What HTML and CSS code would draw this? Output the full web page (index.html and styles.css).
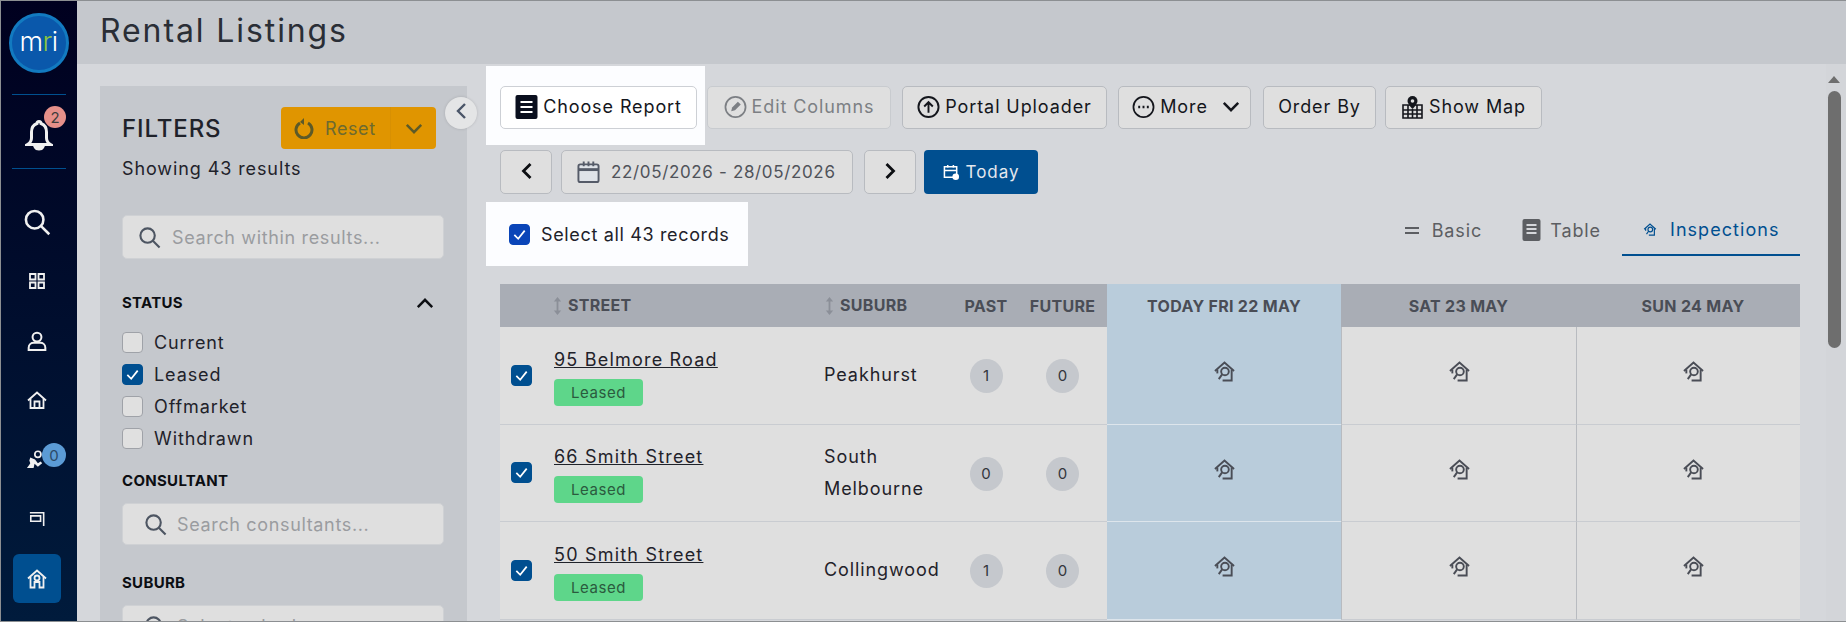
FILE: index.html
```html
<!DOCTYPE html>
<html lang="en">
<head>
    <meta charset="UTF-8">
    <title>Rental Listings</title>
    <link rel="stylesheet" href="styles.css">
</head>
<body>
    <svg class="defs" xmlns="http://www.w3.org/2000/svg">
        <symbol id="i-search" viewBox="0 0 24 24"><circle cx="10" cy="10" r="7.5"/><path d="M15.5 15.5 22.5 22.5"/></symbol>
        <symbol id="i-inspect" viewBox="0 0 24 22"><path d="M2 10.5 12 1.500l10 9"/><path d="M19.500 9v11.500H10"/><path d="M4.500 9v4"/><circle cx="12.500" cy="11" r="4"/><path d="M9.500 14 6 19"/></symbol>
        <symbol id="i-down" viewBox="0 0 20 12"><path d="M2 2l8 8 8-8"/></symbol>
        <symbol id="i-check" viewBox="0 0 22 22"><path d="M5 11.500l4.500 4.500L17 6.500"/></symbol>
    </svg>
    <div class="app">
        <nav class="sidebar">
            <div class="logo"><span>m</span><span class="logo-r">r</span><span>i</span></div>
            <div class="side-line"></div>
            <div class="bell">
                <svg class="bell-icon" viewBox="0 0 28 32"><path d="M14 2.500c-1.400 0-2 1-2 2C8 6 6.500 9 6.500 13v6c0 3-1.500 5-4 6.500h23c-2.500-1.500-4-3.500-4-6.500v-6c0-4-1.500-7-5.500-8.500 0-1-.600-2-2-2z"/><path d="M10.500 28.500c1 2 6 2 7 0z"/></svg>
                <span class="badge badge-red">2</span>
            </div>
            <div class="side-line"></div>
            <div class="side-nav">
                <a class="side-item"><svg class="side-icon big" viewBox="0 0 24 24"><use href="#i-search"/></svg></a>
                <a class="side-item"><svg class="side-icon" viewBox="0 0 16 16"><path d="M1 1h5.500v5.500H1zM9.500 1H15v5.500H9.500zM1 9.500h5.500V15H1zM9.500 9.500H15V15H9.500z"/></svg></a>
                <a class="side-item"><svg class="side-icon wide" viewBox="0 0 18 18"><circle cx="9" cy="5.500" r="4"/><path d="M1.500 17v-2c0-3 2.500-4.500 4.500-4.500h6c2 0 4.500 1.500 4.500 4.500v2z"/></svg></a>
                <a class="side-item"><svg class="side-icon wide" viewBox="0 0 20 18"><path d="M1 9.500 10 1.500l9 8"/><path d="M3.500 8v9h13V8"/><path d="M7.500 17v-6.500h5V17"/></svg></a>
                <a class="side-item">
                    <svg class="side-icon worker" viewBox="0 0 20 20"><circle cx="12.500" cy="4.500" r="3.200"/><path class="solid" d="M4.500 8l5 2 3 4 3-2 1.500 2-4.500 3.500-3.500-3-1 4.500H1l2.500-3.500 1-1.500-1-3z"/></svg>
                    <span class="badge badge-blue">0</span>
                </a>
                <a class="side-item"><svg class="side-icon" viewBox="0 0 18 18"><path d="M1 2h15.500v15"/><path d="M2 5.500h11v6H2z"/></svg></a>
                <a class="side-item is-active"><svg class="side-icon wide" viewBox="0 0 20 20"><path d="M1 9.500 10 1.500l9 8"/><path d="M3.500 8v10.500h4V13h5v5.500h4V8"/><circle cx="10" cy="9" r="2.500"/></svg></a>
            </div>
        </nav>

        <div class="page">
            <header class="topbar">Rental Listings</header>
            <div class="content">
                <aside class="filters">
                    <button class="collapse"><svg viewBox="0 0 12 18"><path d="M10 2 3 9l7 7"/></svg></button>
                    <div class="filters-head">
                        <h2>FILTERS</h2>
                        <div class="reset">
                            <div class="reset-main">
                                <svg class="reset-icon" viewBox="0 0 20 22"><path d="M6 6a8 8 0 1 0 8 0"/><path class="solid" d="M10 1v7L6 5z"/></svg>
                                <span>Reset</span>
                            </div>
                            <div class="reset-more"><svg viewBox="0 0 20 12"><use href="#i-down"/></svg></div>
                        </div>
                    </div>
                    <p class="showing">Showing 43 results</p>
                    <div class="search search-first">
                        <svg viewBox="0 0 24 24"><use href="#i-search"/></svg>
                        <span>Search within results...</span>
                    </div>
                    <div class="filter-title status-title">
                        STATUS
                        <svg viewBox="0 0 20 12"><path d="M2 10l8-8 8 8"/></svg>
                    </div>
                    <ul class="status-list">
                        <li><span class="box"></span>Current</li>
                        <li><span class="box is-on"><svg viewBox="0 0 22 22"><use href="#i-check"/></svg></span>Leased</li>
                        <li><span class="box"></span>Offmarket</li>
                        <li><span class="box"></span>Withdrawn</li>
                    </ul>
                    <div class="filter-title consultant-title">CONSULTANT</div>
                    <div class="search search-in">
                        <svg viewBox="0 0 24 24"><use href="#i-search"/></svg>
                        <span>Search consultants...</span>
                    </div>
                    <div class="filter-title suburb-title">SUBURB</div>
                    <div class="search search-in search-suburb">
                        <svg viewBox="0 0 24 24"><use href="#i-search"/></svg>
                        <span>Select suburb</span>
                    </div>
                </aside>

                <main class="main">
                    <div class="tool-row">
                        <div class="spot spot-report">
                            <button class="btn btn-white btn-report">
                                <svg class="btn-icon" viewBox="0 0 22 24"><rect width="22" height="24" rx="2" fill="#0a0f1e"/><path d="M5 7h12M5 12h12M5 17h12" stroke="#fff" stroke-width="2.200"/></svg>
                                Choose Report
                            </button>
                        </div>
                        <button class="btn btn-off btn-edit">
                            <svg class="btn-icon" viewBox="0 0 24 24"><circle cx="12" cy="12" r="10.500" fill="none" stroke="currentColor" stroke-width="1.800"/><path d="M7.500 16.500l1-4 6-6 3 3-6 6z" fill="currentColor"/></svg>
                            Edit Columns
                        </button>
                        <button class="btn btn-portal">
                            <svg class="btn-icon" viewBox="0 0 24 24"><circle cx="12" cy="12" r="10.500" fill="none" stroke="currentColor" stroke-width="2"/><path d="M12 18V7M7.500 11.500 12 7l4.500 4.500" fill="none" stroke="currentColor" stroke-width="2"/></svg>
                            Portal Uploader
                        </button>
                        <button class="btn btn-more">
                            <svg class="btn-icon" viewBox="0 0 24 24"><circle cx="12" cy="12" r="10.500" fill="none" stroke="currentColor" stroke-width="1.800"/><path d="M6.500 12h2M11 12h2M15.500 12h2" stroke="currentColor" stroke-width="2.400"/></svg>
                            More
                            <svg class="btn-caret" viewBox="0 0 20 12"><use href="#i-down"/></svg>
                        </button>
                        <button class="btn btn-order">Order By</button>
                        <button class="btn btn-map">
                            <svg class="btn-icon" viewBox="0 0 22 24"><path d="M1.500 10h19v13h-19zM1.500 15h19M1.500 19h19M6.500 10v13M11 14v9M15.500 10v13" fill="none" stroke="currentColor" stroke-width="1.600"/><path d="M11 1a5 5 0 0 0-5 5c0 3 5 8 5 8s5-5 5-8a5 5 0 0 0-5-5z" fill="currentColor"/><circle cx="11" cy="6" r="1.800" fill="#dfdfdf"/></svg>
                            Show Map
                        </button>
                    </div>

                    <div class="date-row">
                        <button class="btn btn-step"><svg viewBox="0 0 12 18"><path d="M10 2 3 9l7 7"/></svg></button>
                        <div class="date-range">
                            <svg viewBox="0 0 24 24"><rect x="1.500" y="4" width="21" height="18.500" rx="2" fill="#dfe3e8" stroke="#555b68" stroke-width="2"/><path d="M1.500 9.500h21" stroke="#555b68" stroke-width="3"/><path d="M7 1v5M12 1v5M17 1v5" stroke="#555b68" stroke-width="2"/></svg>
                            22/05/2026 - 28/05/2026
                        </div>
                        <button class="btn btn-step btn-next"><svg viewBox="0 0 12 18"><path d="M2 2l7 7-7 7"/></svg></button>
                        <button class="btn-today">
                            <svg viewBox="0 0 18 18"><path d="M1.500 3h13v11h-13zM1.500 7h13M5 1v3M11 1v3" fill="none" stroke="#fff" stroke-width="1.600"/><circle cx="13.500" cy="13.500" r="3.500" fill="#fff"/></svg>
                            Today
                        </button>
                    </div>

                    <div class="view-row">
                        <label class="spot spot-select">
                            <span class="box box-bright"><svg viewBox="0 0 22 22"><use href="#i-check"/></svg></span>
                            Select all 43 records
                        </label>
                        <div class="tabs">
                            <a class="tab tab-basic"><span class="tab-eq"></span>Basic</a>
                            <a class="tab tab-table">
                                <svg viewBox="0 0 18 22"><rect width="18" height="22" rx="2" fill="#5c5e62"/><path d="M4 6h10M4 10h10M4 14h10" stroke="#d5d7db" stroke-width="1.800"/></svg>
                                Table
                            </a>
                            <a class="tab tab-inspect is-current">
                                <svg class="inspect" viewBox="0 0 24 22"><use href="#i-inspect"/></svg>
                                Inspections
                            </a>
                        </div>
                    </div>

                    <table class="grid">
                        <colgroup>
                            <col class="c-check"><col class="c-street"><col class="c-suburb"><col class="c-past"><col class="c-future"><col class="c-today"><col class="c-sat"><col class="c-sun">
                        </colgroup>
                        <thead>
                            <tr>
                                <th></th>
                                <th class="th-left"><svg class="sort" viewBox="0 0 10 22"><path d="M5 1 1 6h3v10H1l4 5 4-5H6V6h3z"/></svg>STREET</th>
                                <th class="th-left"><svg class="sort" viewBox="0 0 10 22"><path d="M5 1 1 6h3v10H1l4 5 4-5H6V6h3z"/></svg>SUBURB</th>
                                <th>PAST</th>
                                <th>FUTURE</th>
                                <th class="is-today">TODAY FRI 22 MAY</th>
                                <th>SAT 23 MAY</th>
                                <th class="last">SUN 24 MAY</th>
                            </tr>
                        </thead>
                        <tbody>
                            <tr>
                                <td><span class="box is-on"><svg viewBox="0 0 22 22"><use href="#i-check"/></svg></span></td>
                                <td class="listing"><a class="street">95 Belmore Road</a><span class="tag">Leased</span></td>
                                <td class="suburb">Peakhurst</td>
                                <td><span class="count">1</span></td>
                                <td><span class="count">0</span></td>
                                <td class="is-today"><svg class="inspect" viewBox="0 0 24 22"><use href="#i-inspect"/></svg></td>
                                <td class="day"><svg class="inspect" viewBox="0 0 24 22"><use href="#i-inspect"/></svg></td>
                                <td class="day last"><svg class="inspect" viewBox="0 0 24 22"><use href="#i-inspect"/></svg></td>
                            </tr>
                            <tr>
                                <td><span class="box is-on"><svg viewBox="0 0 22 22"><use href="#i-check"/></svg></span></td>
                                <td class="listing"><a class="street">66 Smith Street</a><span class="tag">Leased</span></td>
                                <td class="suburb">South Melbourne</td>
                                <td><span class="count">0</span></td>
                                <td><span class="count">0</span></td>
                                <td class="is-today"><svg class="inspect" viewBox="0 0 24 22"><use href="#i-inspect"/></svg></td>
                                <td class="day"><svg class="inspect" viewBox="0 0 24 22"><use href="#i-inspect"/></svg></td>
                                <td class="day last"><svg class="inspect" viewBox="0 0 24 22"><use href="#i-inspect"/></svg></td>
                            </tr>
                            <tr>
                                <td><span class="box is-on"><svg viewBox="0 0 22 22"><use href="#i-check"/></svg></span></td>
                                <td class="listing"><a class="street">50 Smith Street</a><span class="tag">Leased</span></td>
                                <td class="suburb">Collingwood</td>
                                <td><span class="count">1</span></td>
                                <td><span class="count">0</span></td>
                                <td class="is-today"><svg class="inspect" viewBox="0 0 24 22"><use href="#i-inspect"/></svg></td>
                                <td class="day"><svg class="inspect" viewBox="0 0 24 22"><use href="#i-inspect"/></svg></td>
                                <td class="day last"><svg class="inspect" viewBox="0 0 24 22"><use href="#i-inspect"/></svg></td>
                            </tr>
                        </tbody>
                    </table>
                </main>

                <div class="scrollbar">
                    <span class="scroll-up"></span>
                    <span class="scroll-thumb"></span>
                </div>
            </div>
        </div>
    </div>
</body>
</html>
```

FILE: styles.css
```css
* {
    box-sizing: border-box;
}

body {
    margin: 0;
    font-family: Inter, "DejaVu Sans", sans-serif;
    font-size: 18px;
    letter-spacing: 0.9px;
    color: #1f222a;
    overflow: hidden;
}

button {
    font: inherit;
    letter-spacing: inherit;
}

.defs {
    display: none;
}

.app {
    display: flex;
    width: 1846px;
    height: 622px;
    border: 1px solid #8c8f92;
    border-right: 0;
    overflow: hidden;
    background-color: #d5d7db;
}

/* left navigation */
.sidebar {
    flex: 0 0 76px;
    display: flex;
    flex-direction: column;
    align-items: center;
    padding-top: 12px;
    background: linear-gradient(#00001f, #001b3c);
}

.logo {
    display: flex;
    justify-content: center;
    align-items: center;
    width: 60px;
    height: 60px;
    margin: 0 1px 21px 0;
    padding-bottom: 4px;
    border: 3px solid #127ac0;
    border-radius: 50%;
    background-color: #0a58ab;
    color: #fff;
    font-size: 27px;
    font-weight: 300;
    letter-spacing: -0.5px;
}

.logo-r {
    color: #8cc63f;
}

.side-line {
    width: 54px;
    height: 1px;
    margin-right: 1px;
    background-color: #00508f;
}

.bell {
    position: relative;
    height: 73px;
    width: 54px;
    display: flex;
    justify-content: center;
    align-items: center;
}

.bell-icon {
    width: 28px;
    height: 32px;
    margin-top: 7px;
    fill: none;
    stroke: #f0f0f0;
    stroke-width: 3;
}

.badge {
    position: absolute;
    display: flex;
    justify-content: center;
    align-items: center;
    border-radius: 50%;
    color: #3d3d3d;
    letter-spacing: 0;
}

.badge-red {
    top: 11px;
    left: 32px;
    width: 22px;
    height: 22px;
    background-color: #e5908a;
    font-size: 15px;
}

.badge-blue {
    top: 13px;
    left: 29px;
    width: 24px;
    height: 24px;
    background-color: #5b9bd5;
    color: #2c4a68;
    font-size: 15px;
}

.side-nav {
    margin-top: 23px;
    width: 76px;
}

.side-item {
    position: relative;
    display: flex;
    justify-content: center;
    align-items: center;
    width: 48px;
    height: 59.5px;
    margin-left: 12px;
}

.side-item.is-active {
    height: 49px;
    margin-top: 5px;
    border-radius: 6px;
    background-color: #004f90;
}

.side-icon {
    width: 16px;
    height: 16px;
    fill: none;
    stroke: #f0f0f0;
    stroke-width: 1.8;
}

.side-icon.wide {
    width: 20px;
    height: 20px;
}

.side-icon.worker {
    width: 19px;
    height: 19px;
    margin-right: 3px;
}

.side-icon.big {
    width: 28px;
    height: 28px;
    stroke-width: 2.2;
}

.side-icon .solid {
    fill: #f0f0f0;
    stroke: none;
}

/* page */
.page {
    flex: 1;
    min-width: 0;
    display: flex;
    flex-direction: column;
}

.topbar {
    height: 63px;
    padding: 11px 0 0 23px;
    background-color: #c5c8cd;
    color: #2a2e36;
    font-size: 32px;
    line-height: 38px;
    letter-spacing: 1.9px;
}

.content {
    flex: 1;
    display: flex;
    min-height: 0;
}

/* filters */
.filters {
    position: relative;
    flex: 0 0 367px;
    margin: 22px 0 0 23px;
    padding: 21px 23px 0 22px;
    background-color: #c5c8cd;
}

.collapse {
    position: absolute;
    top: 11px;
    left: 345px;
    width: 32px;
    height: 32px;
    padding: 0;
    border: 0;
    border-radius: 50%;
    background-color: #e4e5e6;
    box-shadow: 0 0 3px rgba(0, 0, 0, 0.15);
}

.collapse svg {
    width: 12px;
    height: 18px;
    fill: none;
    stroke: #4a5568;
    stroke-width: 2.4;
}

.filters-head {
    display: flex;
    justify-content: space-between;
    align-items: center;
    padding-right: 8px;
}

.filters-head h2 {
    margin: 0;
    font-size: 24px;
    font-weight: 500;
    letter-spacing: 0.9px;
}

.reset {
    display: flex;
    width: 155px;
    height: 42px;
    border-radius: 4px;
    background-color: #e09500;
    color: #6d6a30;
    font-size: 18px;
    letter-spacing: 0.6px;
}

.reset-main {
    flex: 1;
    display: flex;
    align-items: center;
    gap: 11px;
    padding-left: 13px;
    border-right: 1px solid #d89002;
}

.reset-icon {
    width: 20px;
    height: 22px;
    fill: none;
    stroke: #5c5a28;
    stroke-width: 3;
}

.reset-icon .solid {
    fill: #5c5a28;
    stroke: none;
}

.reset-more {
    flex: 0 0 45px;
    display: flex;
    justify-content: center;
    align-items: center;
}

.reset-more svg {
    width: 18px;
    height: 11px;
    fill: none;
    stroke: #5c5a28;
    stroke-width: 2.8;
}

.showing {
    margin: 8px 0 0;
    line-height: 24px;
}

.search {
    display: flex;
    align-items: center;
    height: 44px;
    border: 1px solid #cfd1d4;
    border-radius: 5px;
    background-color: #dfdfdf;
    color: #9a9c9f;
    font-size: 18px;
    letter-spacing: 0.65px;
}

.search svg {
    width: 23px;
    height: 23px;
    fill: none;
    stroke: #4d5562;
    stroke-width: 2.2;
}

.search-first {
    margin-top: 34px;
    padding-left: 15px;
    gap: 11px;
}

.search-in {
    padding-left: 21px;
    gap: 10px;
    height: 42px;
}

.search-suburb {
    margin-top: 12px;
}

.filter-title {
    display: flex;
    justify-content: space-between;
    align-items: center;
    font-size: 15px;
    font-weight: 700;
    line-height: 20px;
    letter-spacing: 0.3px;
    color: #0c0e12;
}

.filter-title svg {
    width: 18px;
    height: 11px;
    margin-right: 10px;
    fill: none;
    stroke: #0c0e12;
    stroke-width: 2.8;
}

.status-title {
    margin-top: 34px;
}

.status-list {
    margin: 13px 0 0;
    padding: 0;
    list-style: none;
}

.status-list li {
    display: flex;
    align-items: center;
    gap: 11px;
    height: 32px;
}

.box {
    flex: none;
    display: flex;
    width: 21px;
    height: 21px;
    border: 1px solid #9fa2a8;
    border-radius: 4px;
    background-color: #e0e0e0;
}

.box svg {
    width: 100%;
    height: 100%;
    fill: none;
    stroke: #fff;
    stroke-width: 2;
}

.box.is-on {
    border-color: #004f90;
    background-color: #004f90;
}

.box-bright {
    border-color: #0a45b8;
    background-color: #0a45b8;
}

.consultant-title {
    margin-top: 17px;
}

.consultant-title + .search {
    margin-top: 12px;
}

.suburb-title {
    margin-top: 28px;
}

/* main column */
.main {
    flex: 1;
    min-width: 0;
    margin-left: 19px;
    padding-top: 2px;
}

.tool-row {
    display: flex;
    align-items: flex-start;
}

.spot {
    background-color: #fcfdff;
}

.spot-report {
    width: 219px;
    padding: 20px 8px 16px 14px;
}

.btn {
    display: flex;
    align-items: center;
    justify-content: center;
    gap: 5px;
    height: 43px;
    padding: 0 0 2px;
    border: 1px solid #b8bbc0;
    border-radius: 5px;
    background-color: #dfdfdf;
    color: #14161c;
}

.btn-white {
    border-color: #cdd0d5;
    background-color: #fff;
}

.btn-icon {
    flex: none;
    width: 23px;
    height: 24px;
}

.btn-report {
    width: 197px;
}

.btn-off {
    color: #7c7f84;
    border-color: #c8cbcf;
}

.tool-row .btn {
    margin-top: 20px;
}

.spot-report .btn {
    margin-top: 0;
}

.btn-edit {
    width: 184px;
    margin-left: 2px;
}

.btn-portal {
    width: 205px;
    margin-left: 11px;
}

.btn-more {
    width: 133px;
    margin-left: 11px;
    padding-left: 3px;
}

.btn-caret {
    width: 18px;
    height: 11px;
    margin-left: 9px;
    fill: none;
    stroke: #14161c;
    stroke-width: 2.8;
}

.btn-order {
    width: 113px;
    margin-left: 12px;
}

.btn-map {
    width: 157px;
    margin-left: 9px;
}

.date-row {
    display: flex;
    height: 44px;
    margin: 5px 0 0 14px;
}

.date-row .btn,
.btn-today,
.date-range {
    height: 44px;
}

.btn-step {
    width: 52px;
}

.btn-step svg {
    width: 13px;
    height: 18px;
    fill: none;
    stroke: #0c0e12;
    stroke-width: 2.8;
}

.date-range {
    display: flex;
    align-items: center;
    gap: 11px;
    width: 292px;
    margin-left: 9px;
    padding-left: 15px;
    border: 1px solid #b8bbc0;
    border-radius: 5px;
    background-color: #dfdfdf;
    color: #50535a;
    font-size: 17px;
    letter-spacing: 0.65px;
}

.date-range svg {
    width: 23px;
    height: 24px;
    fill: none;
}

.btn-next {
    margin-left: 11px;
}

.btn-today {
    display: flex;
    justify-content: center;
    align-items: center;
    gap: 6px;
    width: 114px;
    margin-left: 8px;
    padding: 0;
    border: 0;
    border-radius: 4px;
    background-color: #004f90;
    color: #e4e8ee;
    font-size: 17px;
    letter-spacing: 0.95px;
}

.btn-today svg {
    width: 17px;
    height: 17px;
}

.view-row {
    display: flex;
    justify-content: space-between;
    align-items: flex-end;
    height: 64px;
    margin: 8px 26px 0 0;
}

.spot-select {
    display: flex;
    align-items: center;
    gap: 11px;
    width: 262px;
    height: 64px;
    padding-left: 23px;
    letter-spacing: 0.65px;
}

.tabs {
    display: flex;
    align-items: flex-end;
    margin-bottom: 10px;
    color: #5c5e62;
}

.tab {
    display: flex;
    align-items: center;
    height: 50px;
    padding-bottom: 2px;
}

.tab-eq {
    width: 14px;
    height: 7px;
    margin-right: 13px;
    border-top: 2px solid #5c5e62;
    border-bottom: 2px solid #5c5e62;
}

.tab-table {
    gap: 9px;
    margin-left: 40px;
}

.tab-table svg {
    width: 19px;
    height: 22px;
}

.tab-inspect {
    gap: 13px;
    width: 178px;
    margin-left: 21px;
    padding-left: 21px;
    letter-spacing: 1.05px;
}

.tab-inspect .inspect {
    flex: none;
    width: 14px;
    height: 13px;
    stroke: #004f90;
}

.is-current {
    border-bottom: 2px solid #004f90;
    color: #004f90;
}

/* table */
.grid {
    width: 1300px;
    margin: 18px 0 0 14px;
    border-spacing: 0;
    table-layout: fixed;
}

.c-check { width: 50px; }
.c-street { width: 272px; }
.c-suburb { width: 132px; }
.c-past { width: 64px; }
.c-future { width: 89px; }
.c-today { width: 234px; }
.c-sat { width: 235px; }
.c-sun { width: 224px; }

.grid th {
    height: 43px;
    padding: 0;
    background-color: #a9adb5;
    color: #4a4d56;
    font-size: 16px;
    font-weight: 700;
    letter-spacing: 0.3px;
    white-space: nowrap;
}

.grid .th-left {
    padding-left: 2px;
    text-align: left;
}

.sort {
    width: 11px;
    height: 20px;
    margin-right: 5px;
    vertical-align: middle;
    fill: #8b8f98;
}

.grid th.is-today {
    background-color: #b9ccdb;
}

.grid td {
    height: 97.5px;
    padding: 0;
    border-bottom: 1px solid #c9ccd1;
    background-color: #dfdfdf;
    text-align: center;
}

.grid td:first-child {
    padding-left: 11px;
    text-align: left;
}

.grid td.listing {
    padding: 4px 0 0 4px;
    text-align: left;
}

.grid td.suburb {
    padding-left: 2px;
    line-height: 32px;
    text-align: left;
}

.grid td.is-today {
    border-bottom-color: #dde5ec;
    background-color: #b9ccdb;
}

.grid td.day {
    border-left: 1px solid #b8bbc0;
}

.grid .last {
    padding-left: 10px;
}

.street {
    display: block;
    color: #1f222a;
    line-height: 22px;
    text-decoration: underline;
    letter-spacing: 1.2px;
}

.tag {
    display: block;
    width: 89px;
    height: 27px;
    margin-top: 8px;
    border-radius: 4px;
    background-color: #5ed68a;
    color: #2b5a3e;
    font-size: 15px;
    line-height: 27px;
    letter-spacing: 0.6px;
    text-align: center;
}

.count {
    display: inline-block;
    width: 33px;
    height: 34px;
    margin-top: 2px;
    border-radius: 50%;
    background-color: #c5c8cd;
    color: #33363c;
    font-size: 15px;
    line-height: 34px;
    letter-spacing: 0;
}

.inspect {
    width: 23px;
    height: 21px;
    margin-bottom: 3px;
    fill: none;
    stroke: #4a4d56;
    stroke-width: 2;
}

.tab .inspect {
    margin-bottom: 0;
}

/* page scrollbar */
.scrollbar {
    flex: 0 0 20px;
    display: flex;
    flex-direction: column;
    align-items: center;
    padding-right: 4px;
    background-color: #d3d5d9;
}

.scroll-up {
    width: 0;
    height: 0;
    margin-top: 12px;
    border-left: 6px solid transparent;
    border-right: 6px solid transparent;
    border-bottom: 7px solid #6e6e6e;
}

.scroll-thumb {
    width: 13px;
    height: 257px;
    margin-top: 8px;
    border-radius: 7px;
    background-color: #6e6e6e;
}
```
